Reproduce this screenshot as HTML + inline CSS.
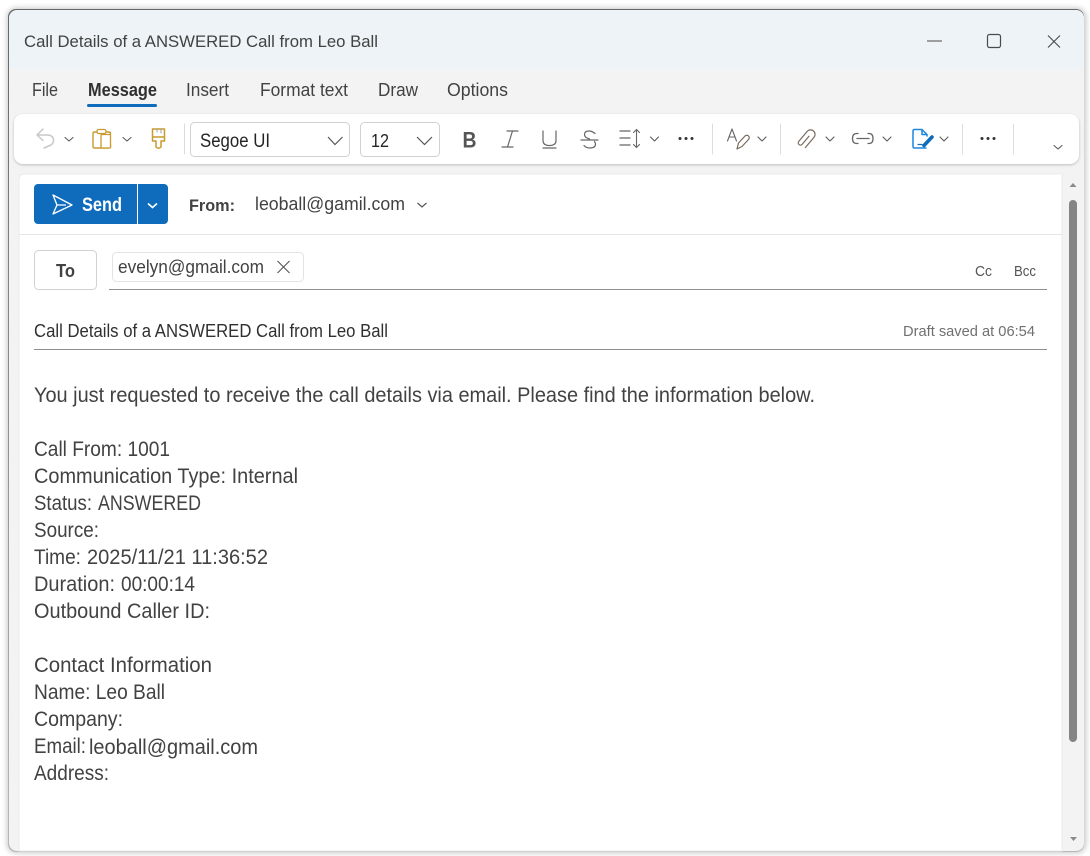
<!DOCTYPE html>
<html><head><meta charset="utf-8"><title>Call Details</title>
<style>
html,body{margin:0;padding:0;background:#fff;width:1090px;height:856px;overflow:hidden}
svg{display:block}
text{font-family:"Liberation Sans",sans-serif;fill:#424242}
</style></head><body>
<svg width="1090" height="856" viewBox="0 0 1090 856" xmlns="http://www.w3.org/2000/svg">
<defs>
<filter id="sh" x="-5%" y="-5%" width="110%" height="110%"><feGaussianBlur stdDeviation="3"/></filter>
<filter id="s2" x="-5%" y="-20%" width="110%" height="140%"><feGaussianBlur stdDeviation="1.2"/></filter>
<clipPath id="win"><rect x="9" y="10" width="1075" height="841" rx="8"/></clipPath>
<linearGradient id="bd" x1="0" y1="0" x2="0" y2="1"><stop offset="0" stop-color="#666"/><stop offset=".4" stop-color="#888"/><stop offset="1" stop-color="#b8b8b8"/></linearGradient>
</defs>
<rect x="7" y="8" width="1079" height="845" rx="9" fill="#000" opacity=".22" filter="url(#sh)"/>
<rect x="8" y="9" width="1076" height="843" rx="8" fill="url(#bd)"/>
<g clip-path="url(#win)">
<rect x="9" y="10" width="1075" height="841" fill="#f3f3f3"/>
<rect x="9" y="10" width="1075" height="59" fill="#edf3f7"/>
</g>
<text x="24" y="47" font-size="17" textLength="354" lengthAdjust="spacingAndGlyphs">Call Details of a ANSWERED Call from Leo Ball</text>
<!-- window controls -->
<path d="M927 41H942" stroke="#7a7a7a" stroke-width="1.4"/>
<rect x="987.5" y="34.5" width="13" height="13" rx="2" fill="none" stroke="#4a4a4a" stroke-width="1.2"/>
<path d="M1048 35.5L1060 47.5M1060 35.5L1048 47.5" stroke="#4a4a4a" stroke-width="1.1" fill="none"/>
<!-- tabs -->
<text x="32" y="96" font-size="18" textLength="26" lengthAdjust="spacingAndGlyphs">File</text>
<text x="88" y="96" font-size="18" font-weight="700" textLength="69" lengthAdjust="spacingAndGlyphs" style="fill:#303030">Message</text>
<rect x="87" y="104" width="70" height="3" rx="1.5" fill="#0f6cbd"/>
<text x="186" y="96" font-size="18" textLength="43" lengthAdjust="spacingAndGlyphs">Insert</text>
<text x="260" y="96" font-size="18" textLength="88" lengthAdjust="spacingAndGlyphs">Format text</text>
<text x="378" y="96" font-size="18" textLength="40" lengthAdjust="spacingAndGlyphs">Draw</text>
<text x="447" y="96" font-size="18" textLength="61" lengthAdjust="spacingAndGlyphs">Options</text>
<!-- toolbar -->
<rect x="14" y="115" width="1065" height="50" rx="9" fill="#000" opacity=".22" filter="url(#s2)"/>
<rect x="14" y="114" width="1065" height="50" rx="9" fill="#fff"/>
<g fill="none" stroke-linecap="round" stroke-linejoin="round">
<path d="M37 135L43 129M37 135L43 140.500M37 135H47Q53.500 135 53.500 140.500Q53.500 143 51 145L44 148" stroke="#c8c8c8" stroke-width="1.500"/>
<path d="M65 137.500L69 141L73 137.500" stroke="#5a5a5a" stroke-width="1.100"/>
<path d="M97 132H94.500Q93 132 93 133.500V146.500Q93 148 94.500 148H108.500Q110.500 148 110.500 146.500V145M106 132H108.500Q110.500 132 110.500 133.500V134" stroke="#c99a2e" stroke-width="1.400"/>
<rect x="97" y="129.500" width="9" height="4" rx="1.500" stroke="#c99a2e" stroke-width="1.200"/>
<rect x="101" y="134.500" width="9.500" height="13.500" rx="1" stroke="#c99a2e" stroke-width="1.300" fill="#fff"/>
<path d="M123 137.500L127 141L131 137.500" stroke="#5a5a5a" stroke-width="1.100"/>
<path d="M152.500 129H164.500V141H161V147Q158.500 149.500 156 147V141H152.500ZM152.500 137H164.500" stroke="#c99a2e" stroke-width="1.500"/>
<path d="M161 129V133M157 129V132" stroke="#a0a0a0" stroke-width="1"/>
<path d="M184.500 124V154" stroke="#dcdcdc" stroke-width="1"/>
</g>
<!-- font select -->
<rect x="190.500" y="122.500" width="159" height="34" rx="4" fill="#fff" stroke="#d1d1d1"/>
<text x="200" y="147" font-size="19" textLength="70" lengthAdjust="spacingAndGlyphs" style="fill:#242424">Segoe UI</text>
<path d="M328 137L335 144.500L342.500 137" fill="none" stroke="#555" stroke-width="1.200"/>
<rect x="360.500" y="122.500" width="79" height="34" rx="4" fill="#fff" stroke="#d1d1d1"/>
<text x="371" y="147" font-size="18" textLength="18" lengthAdjust="spacingAndGlyphs" style="fill:#242424">12</text>
<path d="M417 137L424.500 144.500L432 137" fill="none" stroke="#555" stroke-width="1.200"/>
<!-- format icons -->
<text x="462.500" y="147.500" font-size="22" font-weight="700" textLength="14" lengthAdjust="spacingAndGlyphs" style="fill:#555">B</text>
<g fill="none" stroke-linecap="round" stroke-linejoin="round">
<path d="M507 131H518M502 147H513M512.500 131L507.500 147" stroke="#666" stroke-width="1.200"/>
<path d="M543 131V140.500Q543 145.500 549.500 145.500Q556 145.500 556 140.500V131M543 148H556" stroke="#666" stroke-width="1.200"/>
<path d="M581 140H598M595 133.500Q592 131 589 131Q584.500 131 584.500 134.500Q584.500 137.500 589.500 139M594.500 141.500Q595.500 143 595.500 144Q595.500 148 590 148Q586 148 584 145.500" stroke="#666" stroke-width="1.200"/>
<path d="M620 131H630M620 138H630M620 145H630" stroke="#666" stroke-width="1.300"/>
<path d="M636.500 129.500V147.500M633.500 132.500L636.500 129.500L639.500 132.500M633.500 144.500L636.500 147.500L639.500 144.500" stroke="#666" stroke-width="1.100"/>
<path d="M650.500 137L654.500 141L658.500 137" stroke="#5a5a5a" stroke-width="1.100"/>
<path d="M712.500 124V154" stroke="#dcdcdc"/>
<path d="M727.500 141L732 129L736.500 141M729.500 137H734.500" stroke="#666" stroke-width="1.100"/>
<path d="M737 149L738.500 143L745 136Q747 134.500 748.500 136Q750 137.500 748.500 139.500L742 146.500L737 149Z" stroke="#7a6a5c" stroke-width="1.200"/>
<path d="M758 137L762 141L766 137" stroke="#5a5a5a" stroke-width="1.100"/>
<path d="M780.500 124V154" stroke="#dcdcdc"/>
<path d="M806.500 135V145.500A2.250 2.250 0 0 1 802 145.500V132.500A4.500 4.500 0 0 1 811 132.500V146" stroke="#7a6a5c" stroke-width="1.200" transform="rotate(40 806 139)"/>
<path d="M826 137L830 141L834 137" stroke="#5a5a5a" stroke-width="1.100"/>
<path d="M858 133.500H857Q852.500 133.500 852.500 138.500Q852.500 143.500 857 143.500H858M868 133.500H869Q873 133.500 873 138.500Q873 143.500 869 143.500H868M857 138.500H869" stroke="#666" stroke-width="1.300"/>
<path d="M883 137L887 141L891 137" stroke="#5a5a5a" stroke-width="1.100"/>
<path d="M926 148H914.500Q913 148 913 146.500V131Q913 129.500 914.500 129.500H922L927 134.500V136M922 129.500V134.500H927" stroke="#1f86e0" stroke-width="1.500"/>
<path d="M918 144.500H922" stroke="#1f6cb0" stroke-width="1.200"/>
<path d="M924 145.500L932 137" stroke="#0f6cbd" stroke-width="3.600"/>
<path d="M940 137L944 141L948 137" stroke="#5a5a5a" stroke-width="1.100"/>
<path d="M962.500 124V154M1013.500 124V154" stroke="#dcdcdc"/>
<path d="M1054 145.500L1058 149L1062 145.500" stroke="#5a5a5a" stroke-width="1.100"/>
</g>
<g fill="#333">
<circle cx="680" cy="138.500" r="1.500"/><circle cx="686" cy="138.500" r="1.500"/><circle cx="692" cy="138.500" r="1.500"/>
<circle cx="982" cy="138.500" r="1.500"/><circle cx="988" cy="138.500" r="1.500"/><circle cx="994" cy="138.500" r="1.500"/>
</g>
<!-- compose card -->
<path d="M19 851V180Q19 174 25 174H1062V851Z" fill="#fff" stroke="#ebebeb" stroke-width="1"/>
<!-- send -->
<rect x="34" y="184" width="134" height="40" rx="4" fill="#0f6cbd"/>
<path d="M137.500 184V224" stroke="#fff"/>
<path d="M53 195L72 205L53 214L57 205ZM57 205H66" fill="none" stroke="#fff" stroke-width="1.300" stroke-linejoin="round"/>
<text x="82" y="211" font-size="19" font-weight="700" textLength="40" lengthAdjust="spacingAndGlyphs" style="fill:#fff">Send</text>
<path d="M148 203.500L152.500 207.500L157 203.500" fill="none" stroke="#fff" stroke-width="1.600"/>
<text x="189" y="211" font-size="17" font-weight="700" textLength="46" lengthAdjust="spacingAndGlyphs">From:</text>
<text x="255" y="210" font-size="18" textLength="150" lengthAdjust="spacingAndGlyphs">leoball@gamil.com</text>
<path d="M417.500 203L422 207L426.500 203" fill="none" stroke="#555" stroke-width="1.200"/>
<path d="M19 234.500H1062" stroke="#e6e6e6"/>
<!-- To -->
<rect x="34.500" y="250.500" width="62" height="39" rx="4" fill="#fff" stroke="#d1d1d1"/>
<text x="56" y="277" font-size="18" font-weight="700" textLength="19" lengthAdjust="spacingAndGlyphs">To</text>
<rect x="112.500" y="252.500" width="191" height="29" rx="4" fill="#fff" stroke="#e3e3e3"/>
<text x="118" y="273" font-size="18" textLength="146" lengthAdjust="spacingAndGlyphs">evelyn@gmail.com</text>
<path d="M277.500 261L289.500 273M289.500 261L277.500 273" stroke="#555" stroke-width="1.100"/>
<text x="975" y="276" font-size="15" textLength="17" lengthAdjust="spacingAndGlyphs" style="fill:#555">Cc</text>
<text x="1014" y="276" font-size="15" textLength="22" lengthAdjust="spacingAndGlyphs" style="fill:#555">Bcc</text>
<path d="M109 289.500H1047" stroke="#8f8f8f"/>
<!-- subject -->
<text x="34" y="337" font-size="18" textLength="354" lengthAdjust="spacingAndGlyphs" style="fill:#303030">Call Details of a ANSWERED Call from Leo Ball</text>
<text x="903" y="336" font-size="15" textLength="132" lengthAdjust="spacingAndGlyphs" style="fill:#707070">Draft saved at 06:54</text>
<path d="M34 349.500H1047" stroke="#8f8f8f"/>
<!-- body -->
<g font-size="21">
<text x="34" y="402" textLength="781" lengthAdjust="spacingAndGlyphs">You just requested to receive the call details via email. Please find the information below.</text>
<text x="34" y="456" textLength="136" lengthAdjust="spacingAndGlyphs">Call From: 1001</text>
<text x="34" y="483" textLength="264" lengthAdjust="spacingAndGlyphs">Communication Type: Internal</text>
<text x="34" y="510" textLength="58" lengthAdjust="spacingAndGlyphs">Status:</text>
<text x="98" y="510" textLength="103" lengthAdjust="spacingAndGlyphs">ANSWERED</text>
<text x="34" y="537" textLength="65" lengthAdjust="spacingAndGlyphs">Source:</text>
<text x="34" y="564" textLength="47" lengthAdjust="spacingAndGlyphs">Time:</text>
<text x="87" y="564" textLength="181" lengthAdjust="spacingAndGlyphs">2025/11/21 11:36:52</text>
<text x="34" y="591" textLength="81" lengthAdjust="spacingAndGlyphs">Duration:</text>
<text x="121" y="591" textLength="74" lengthAdjust="spacingAndGlyphs">00:00:14</text>
<text x="34" y="618" textLength="176" lengthAdjust="spacingAndGlyphs">Outbound Caller ID:</text>
<text x="34" y="672" textLength="178" lengthAdjust="spacingAndGlyphs">Contact Information</text>
<text x="34" y="699" textLength="131" lengthAdjust="spacingAndGlyphs">Name: Leo Ball</text>
<text x="34" y="726" textLength="89" lengthAdjust="spacingAndGlyphs">Company:</text>
<text x="34" y="753" textLength="52" lengthAdjust="spacingAndGlyphs">Email:</text>
<text x="89" y="754" textLength="169" lengthAdjust="spacingAndGlyphs">leoball@gmail.com</text>
<text x="34" y="780" textLength="75" lengthAdjust="spacingAndGlyphs">Address:</text>
</g>
<!-- scrollbar -->
<path d="M1069.500 187L1073 183L1076.500 187Z" fill="#8a8a8a"/>
<rect x="1069" y="200" width="8" height="542" rx="4" fill="#858585"/>
<path d="M1070 837L1073.500 841L1077 837Z" fill="#8a8a8a"/>
</svg>
</body></html>
